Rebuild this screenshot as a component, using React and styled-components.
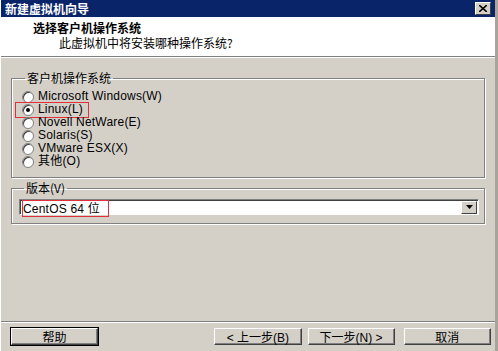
import React from "react";
import styled, { createGlobalStyle } from "styled-components";

const Global = createGlobalStyle`
  html, body { margin: 0; padding: 0; background: #d4d0c8; }
  body { font-family: "Liberation Sans", "Noto Sans CJK SC", sans-serif; font-size: 12px; color: #000; }
`;

const Window = styled.div`
  width: 498px;
  height: 351px;
  box-sizing: border-box;
  background: #d4d0c8;
  border-right: 3px solid #a8a49c;
  border-left: 1px solid #fff;
  display: flex;
  flex-direction: column;
  overflow: hidden;
`;

const TitleBar = styled.div`
  height: 17px;
  flex-shrink: 0;
  background: #0a246a;
  color: #fff;
  display: flex;
  align-items: center;
  justify-content: space-between;
  padding: 0 4px 0 4px;
  font-family: "Noto Sans CJK SC", sans-serif;
  font-weight: bold;
  font-size: 12px;
`;

const CloseBtn = styled.div`
  width: 14px;
  height: 11px;
  background: #d4d0c8;
  border: 1px solid;
  border-color: #fff #404040 #404040 #fff;
  display: flex;
  align-items: center;
  justify-content: center;
`;

const Header = styled.div`
  height: 40px;
  flex-shrink: 0;
  background: #fff;
  border-bottom: 1px solid #808080;
  box-shadow: 0 1px 0 #fff;
  padding: 3px 0 0 32px;
  box-sizing: border-box;
  font-family: "Noto Sans CJK SC", sans-serif;
  line-height: 15px;
`;

const HeadTitle = styled.div`
  font-weight: bold;
  font-size: 12px;
`;

const HeadSub = styled.div`
  padding-left: 26px;
  font-size: 12px;
`;

const Body = styled.div`
  flex: 1;
  padding: 14px 10px 0 10px;
  display: flex;
  flex-direction: column;
  gap: 3px;
`;

const Group = styled.fieldset`
  margin: 0;
  padding: ${(p) => p.$pad};
  border: 1px solid #808080;
  box-shadow: inset 1px 1px 0 #fff, 1px 1px 0 #fff;
  display: flex;
  flex-direction: column;
`;

const Legend = styled.legend`
  padding: 0 2px;
  margin-left: 5px;
  font-family: "Noto Sans CJK SC", sans-serif;
  font-size: 12px;
  line-height: 14px;
`;

const RadioRow = styled.div`
  position: relative;
  height: 13px;
  display: flex;
  align-items: center;
  gap: 4px;
  padding-left: 2px;
`;

const Radio = styled.span`
  width: 10px;
  height: 10px;
  border-radius: 50%;
  background: #fff;
  border: 1px solid #808080;
  box-shadow: inset 1px 1px 0 #404040;
  display: flex;
  align-items: center;
  justify-content: center;
  &::after {
    content: "";
    width: 4px;
    height: 4px;
    border-radius: 50%;
    background: ${(p) => (p.$on ? "#000" : "transparent")};
  }
`;

const RadioLabel = styled.span`
  font-size: 12px;
  line-height: 13px;
  letter-spacing: 0.2px;
`;

const Highlight = styled.span`
  position: absolute;
  left: ${(p) => p.$l}px;
  top: ${(p) => p.$t}px;
  width: ${(p) => p.$w}px;
  height: ${(p) => p.$h}px;
  border: 1px solid #e0303c;
  pointer-events: none;
`;

const Combo = styled.div`
  position: relative;
  height: 14px;
  background: #fff;
  border: 1px solid;
  border-color: #808080 #fff #fff #808080;
  box-shadow: inset 1px 1px 0 #404040;
  display: flex;
  align-items: center;
  justify-content: space-between;
  padding-left: 3px;
`;

const ComboText = styled.span`
  font-size: 12px;
  letter-spacing: 0.2px;
`;

const ComboArrow = styled.div`
  width: 14px;
  height: 11px;
  margin-right: 1px;
  background: #d4d0c8;
  border: 1px solid;
  border-color: #fff #404040 #404040 #fff;
  display: flex;
  align-items: center;
  justify-content: center;
`;

const Spacer = styled.div`
  flex: 1;
`;

const Footer = styled.div`
  flex-shrink: 0;
  border-top: 1px solid #808080;
  box-shadow: inset 0 1px 0 #fff;
  padding: 6px 4px 6px 10px;
  display: flex;
  align-items: center;
  gap: 6px;
`;

const Button = styled.div`
  width: 86px;
  height: 15px;
  box-sizing: content-box;
  border: 1px solid;
  border-color: #fff #404040 #404040 #fff;
  box-shadow: inset -1px -1px 0 #808080;
  background: #d4d0c8;
  display: flex;
  align-items: center;
  justify-content: center;
  font-size: 12px;
  outline: ${(p) => (p.$def ? "1px solid #000" : "none")};
  margin-right: ${(p) => p.$mr || 0}px;
`;

const options = [
  "Microsoft Windows(W)",
  "Linux(L)",
  "Novell NetWare(E)",
  "Solaris(S)",
  "VMware ESX(X)",
  "其他(O)",
];

export default function App() {
  return (
    <>
      <Global />
      <Window>
        <TitleBar>
          <span>新建虚拟机向导</span>
          <CloseBtn>
            <svg width="8" height="7" viewBox="0 0 8 7">
              <path d="M0 0 L8 7 M8 0 L0 7" stroke="#000" strokeWidth="1.6" />
            </svg>
          </CloseBtn>
        </TitleBar>
        <Header>
          <HeadTitle>选择客户机操作系统</HeadTitle>
          <HeadSub>此虚拟机中将安装哪种操作系统?</HeadSub>
        </Header>
        <Body>
          <Group $pad="5px 8px 9px 8px">
            <Legend>客户机操作系统</Legend>
            {options.map((o, i) => (
              <RadioRow key={o}>
                <Radio $on={i === 1} />
                <RadioLabel>{o}</RadioLabel>
                {i === 1 && <Highlight $l={-5} $t={-1} $w={72} $h={14} />}
              </RadioRow>
            ))}
          </Group>
          <Group $pad="4px 5px 8px 7px">
            <Legend>版本(V)</Legend>
            <Combo>
              <ComboText>CentOS 64 位</ComboText>
              <Highlight $l={2} $t={0} $w={85} $h={15} />
              <ComboArrow>
                <svg width="7" height="4" viewBox="0 0 7 4">
                  <path d="M0 0 H7 L3.5 4 Z" fill="#000" />
                </svg>
              </ComboArrow>
            </Combo>
          </Group>
          <Spacer />
        </Body>
        <Footer>
          <Button $def $mr={110}>帮助</Button>
          <Button>&lt; 上一步(B)</Button>
          <Button $mr={3}>下一步(N) &gt;</Button>
          <Button>取消</Button>
        </Footer>
      </Window>
    </>
  );
}
